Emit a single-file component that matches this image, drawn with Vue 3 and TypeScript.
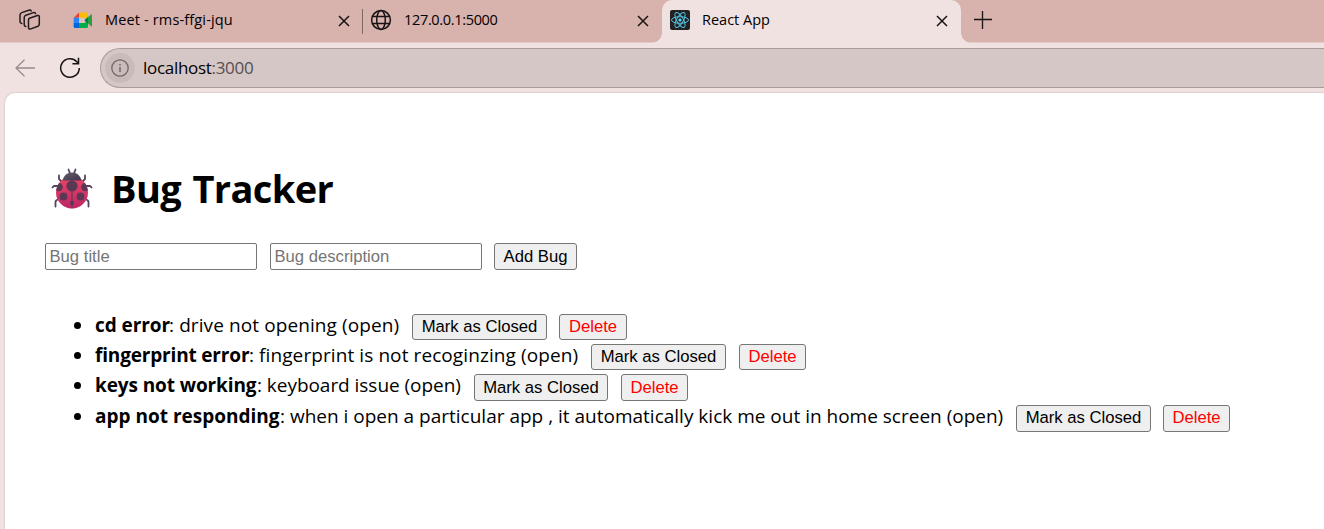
<script setup lang="ts">
interface Bug {
  id: string
  title: string
  description: string
  status: string
}

const bugs: Bug[] = [
  { id: 'cd', title: 'cd error', description: 'drive not opening', status: 'open' },
  { id: 'finger', title: 'fingerprint error', description: 'fingerprint is not recoginzing', status: 'open' },
  { id: 'keys', title: 'keys not working', description: 'keyboard issue', status: 'open' },
  { id: 'app', title: 'app not responding', description: 'when i open a particular app , it automatically kick me out in home screen', status: 'open' },
]
</script>

<template>
  <div class="browser">
    <header class="tabs">
      <svg class="workspaces" width="22" height="22" viewBox="0 0 22 22" fill="none" stroke="#211b1b" stroke-width="1.5" stroke-linejoin="round" stroke-linecap="round">
        <path d="M10.500 9.200 18.400 6.500Q20.300 6 20.300 8V15Q20.300 16.700 19 17.200L11.800 19.900Q9.500 20.700 9.500 18.500V10.800Q9.500 9.600 10.500 9.200Z" />
        <path d="M6.800 17.500Q5.200 17.300 5.200 15.700V8.500Q5.200 6.800 6.800 6.200L14.500 3.600Q16.200 3.200 16.600 4.600" />
        <path d="M2.800 14.500Q1 14.200 1 12.500V6Q1 4.200 2.800 3.600L9.800 1.200Q11.700.7 12.200 2" />
      </svg>
      <div class="tab meet">
        <svg class="favicon" width="20" height="20" viewBox="0 0 20 20">
          <path d="M6 2.500H13.500Q15 2.500 15 4V10L11.500 8H6Z" fill="#fbbc04" />
          <path d="M.7 7.700 6 2.500V7.700Z" fill="#ea4335" />
          <path d="M.7 7.700H6V13H.7Z" fill="#2684fc" />
          <path d="M.7 13H6V18H2.200Q.7 18 .7 16.500Z" fill="#0066da" />
          <path d="M6 7.700H11.500V13H6Z" fill="#d9c3c6" />
          <path d="M6 13H11.500L15 10.200V16.500Q15 18 13.500 18H6Z" fill="#00ac47" />
          <path d="M11.500 10.300 17.700 4.700Q19 3.800 19 5.200V15.700Q19 17 17.700 16L11.500 10.300Z" fill="#24a148" />
          <path d="M11.500 10.300 15 7.100V13.500Z" fill="#087d36" />
        </svg>
        <span class="label">Meet - rms-ffgi-jqu</span>
        <svg class="close" width="12" height="12" viewBox="0 0 12 12"><path d="M1 1 11 11M11 1 1 11" /></svg>
      </div>
      <div class="tab local">
        <svg class="favicon" width="22" height="22" viewBox="0 0 22 22" fill="none" stroke="#181313" stroke-width="1.5">
          <circle cx="11" cy="11" r="9.400" />
          <ellipse cx="11" cy="11" rx="4.300" ry="9.400" />
          <path d="M2.400 7.500H19.600M2.400 14.500H19.600" />
        </svg>
        <span class="label">127.0.0.1:5000</span>
        <svg class="close" width="12" height="12" viewBox="0 0 12 12"><path d="M1 1 11 11M11 1 1 11" /></svg>
      </div>
      <div class="tab active">
        <svg class="favicon" width="20" height="20" viewBox="0 0 20 20">
          <rect width="20" height="20" rx="2" fill="#222" />
          <g fill="none" stroke="#53c1de" stroke-width="1">
            <ellipse cx="10" cy="10" rx="8.500" ry="3.300" />
            <ellipse cx="10" cy="10" rx="8.500" ry="3.300" transform="rotate(60 10 10)" />
            <ellipse cx="10" cy="10" rx="8.500" ry="3.300" transform="rotate(120 10 10)" />
          </g>
          <circle cx="10" cy="10" r="1.600" fill="#61dafb" />
        </svg>
        <span class="label">React App</span>
        <svg class="close" width="12" height="12" viewBox="0 0 12 12"><path d="M1 1 11 11M11 1 1 11" /></svg>
      </div>
      <svg class="plus" width="18" height="18" viewBox="0 0 18 18"><path d="M0 8.500H18M8.500 0V18" stroke="#181313" stroke-width="1.3" /></svg>
    </header>

    <nav class="toolbar">
      <svg class="back" width="20" height="18" viewBox="0 0 20 18" fill="none" stroke="#978b8a" stroke-width="1.3"><path d="M20 9H1M9.500.7 1 9 9.500 17.300" /></svg>
      <svg class="reload" width="22" height="22" viewBox="0 0 22 22" fill="none" stroke="#181313" stroke-width="1.5">
        <path d="M20.300 11A9.300 9.300 0 1 1 18 4.900L19.300 6.500M19.500.8V6.700H13.400" />
      </svg>
      <div class="address">
        <span class="info">
          <svg width="18" height="18" viewBox="0 0 18 18" fill="none" stroke="#716867" stroke-width="1.3"><circle cx="9" cy="9" r="8.200" /><path d="M9 8V13M9 5V6.500" stroke-width="1.500" /></svg>
        </span>
        <span class="url">localhost<i>:3000</i></span>
      </div>
    </nav>

    <main class="page">
      <h1>
        <svg class="ladybug" width="42" height="42" viewBox="0 0 42 42">
          <defs>
            <linearGradient id="shell" x1="0" y1="0" x2="0" y2="1"><stop offset="0" stop-color="#eb4565" /><stop offset="1" stop-color="#bd2765" /></linearGradient>
            <linearGradient id="head" x1="0" y1="0" x2="1" y2="1"><stop offset="0" stop-color="#635d68" /><stop offset="1" stop-color="#40324c" /></linearGradient>
            <clipPath id="body"><circle cx="21" cy="24.500" r="16" /></clipPath>
          </defs>
          <g fill="none" stroke="#55435e" stroke-width="1.800" stroke-linecap="round" stroke-linejoin="round">
            <path d="M17.500 1.500 19 5.500M24.500 1.500 23 5.500M8 7.500V11L11 14M34 7.500V11L31 14M1.500 19.500 3 17.800 7 18M40.500 19.500 39 17.800 35 18M4.500 38.500V34Q4.500 32 8 31M37.500 38.500V34Q37.500 32 34 31" />
          </g>
          <circle cx="21" cy="24.500" r="16" fill="url(#shell)" />
          <path d="M11.500 12.500Q13.500 4.500 21 4.500Q28.500 4.500 30.500 12.500Z" fill="url(#head)" />
          <g clip-path="url(#body)" fill="#5b3854">
            <circle cx="21" cy="18" r="5.600" /><circle cx="7.500" cy="19" r="4.300" /><circle cx="34.500" cy="19" r="4.300" />
            <circle cx="12.500" cy="28.500" r="3.900" /><circle cx="29.500" cy="28.500" r="3.900" />
            <path d="M20.500 12H21.500V41H20.500Z" /><ellipse cx="21" cy="35" rx="2" ry="2.500" />
          </g>
        </svg>
        <span>Bug Tracker</span>
      </h1>

      <form class="bug-form" @submit.prevent>
        <input type="text" placeholder="Bug title" />
        <input type="text" placeholder="Bug description" />
        <button type="submit" class="add">Add Bug</button>
      </form>

      <ul class="bugs">
        <li v-for="bug in bugs" :key="bug.id" :class="bug.id">
          <span class="text"><strong>{{ bug.title }}</strong><span class="detail">: {{ bug.description }} ({{ bug.status }})</span></span>
          <button type="button" class="mark">Mark as Closed</button>
          <button type="button" class="delete">Delete</button>
        </li>
      </ul>
    </main>
  </div>
</template>

<style>
body { margin: 0; overflow: hidden; }
</style>

<style scoped>
* { box-sizing: border-box; }
.browser { width: 1324px; height: 529px; display: flex; flex-direction: column; overflow: hidden; background: #f0e2e0; font-family: "Open Sans", "Noto Sans", sans-serif; color: #000; }
svg { display: block; flex: none; }
.tabs { height: 42px; flex: none; display: flex; background: #d8b2ac; box-shadow: 0 1px #e5cac6; }
.workspaces { margin: 9px 0 0 19px; }
.tab { flex: none; height: 42px; display: flex; align-items: center; padding-bottom: 2px; font-size: 14.5px; white-space: nowrap; }
.label { line-height: 20px; }
.close { margin: 1px 0 0 auto; fill: none; stroke: #181313; stroke-width: 1.5; }
.meet { width: 309px; margin-left: 32px; padding-right: 32px; }
.local { width: 291px; padding-right: 12px; position: relative; margin-left: -12px; }
.local::before { content: ""; position: absolute; left: -8px; top: 9px; width: 1px; height: 25px; background: #806866; }
.meet .label { margin-left: 12px; letter-spacing: 0.15px; }
.local .label { margin-left: 12px; letter-spacing: -0.33px; }
.active .label { margin-left: 12px; }
.active { position: relative; width: 299px; height: 43px; padding: 0 13px 3px 8px; margin-left: 1px; background: #f0e2e0; border-radius: 10px 10px 0 0; }
.active::before, .active::after { content: ""; position: absolute; bottom: 0; width: 10px; height: 10px; }
.active::before { left: -10px; background: radial-gradient(circle at 0 0, transparent 9.5px, #f0e2e0 10px); }
.active::after { right: -10px; background: radial-gradient(circle at 100% 0, transparent 9.5px, #f0e2e0 10px); }
.plus { margin: 11px 0 0 13px; }
.toolbar { height: 51px; flex: none; display: flex; align-items: center; padding-left: 15px; }
.reload { margin-left: 24px; }
.address { height: 40px; flex: 1; margin-left: 19px; border: 1px solid #a99c9b; border-right: 0; border-radius: 20px 0 0 20px; background: #d5c7c6; display: flex; align-items: center; padding-left: 4px; }
.info { width: 30px; height: 30px; border-radius: 50%; background: #c9bbba; display: flex; align-items: center; justify-content: center; }
.url { margin-left: 8px; font-size: 17px; line-height: 24px; letter-spacing: -0.3px; }
.url i { font-style: normal; color: #554e4e; }
.page { flex: 1; margin-left: 5px; background: #fff; border-radius: 10px 0 0 0; box-shadow: 0 0 2px #bba9a7; padding: 69px 0 0 40px; }
h1 { margin: 0; height: 54px; display: flex; align-items: center; font-size: 38px; line-height: 54px; font-weight: 700; letter-spacing: -0.6px; word-spacing: 2px; }
.ladybug { margin-left: 6px; }
h1 span { margin: -2px 0 0 18px; white-space: nowrap; }
input, button { font-family: "Liberation Sans", Arial, sans-serif; font-size: 16.667px; margin: 0; border: 1px solid #767676; flex: none; }
input { width: 212px; height: 27px; padding: 1px 3px 1px 3.5px; border-radius: 2px; background: #fff; }
input::placeholder { color: #757575; opacity: 1; }
button { height: 26px; padding: 0; background: #efefef; border-radius: 3px; color: #000; white-space: nowrap; }
.bug-form { display: flex; margin-top: 27px; gap: 13px; }
.add { width: 83px; height: 27px; margin-left: -1px; }
.bugs { margin: 42px 0 0; padding: 0 0 0 50px; list-style: none; }
li { height: 30px; display: flex; align-items: center; position: relative; font-size: 19px; line-height: 30px; }
.app { margin-top: 1px; }
li::before { content: ""; position: absolute; left: -21px; top: 10px; width: 7px; height: 7px; border-radius: 50%; background: #000; }
.text { display: flex; white-space: pre; flex: none; margin-top: -4px; }
.cd .text { width: 317px; }
.finger .text { width: 496px; }
.keys .text { width: 379px; }
.app .text { width: 921px; }
strong { flex: none; letter-spacing: -0.08px; }
.cd strong { width: 74px; }
.finger strong { width: 154px; letter-spacing: -0.17px; }
.keys strong { width: 162px; letter-spacing: -0.1px; }
.app strong { width: 185px; letter-spacing: 0; }
.cd .detail { letter-spacing: 0.1px; }
.finger .detail { letter-spacing: 0.09px; }
.keys .detail { letter-spacing: -0.04px; }
.mark { width: 135px; }
.delete { width: 68px; margin-left: 12px; color: #f00; }
.finger .delete { width: 67px; margin-left: 13px; }
.keys .mark { width: 134px; }
.keys .delete { width: 67px; margin-left: 13px; }
.keys button { height: 27px; margin-top: 1px; }
.app .delete { width: 67px; }
.app button { height: 27px; }
</style>
